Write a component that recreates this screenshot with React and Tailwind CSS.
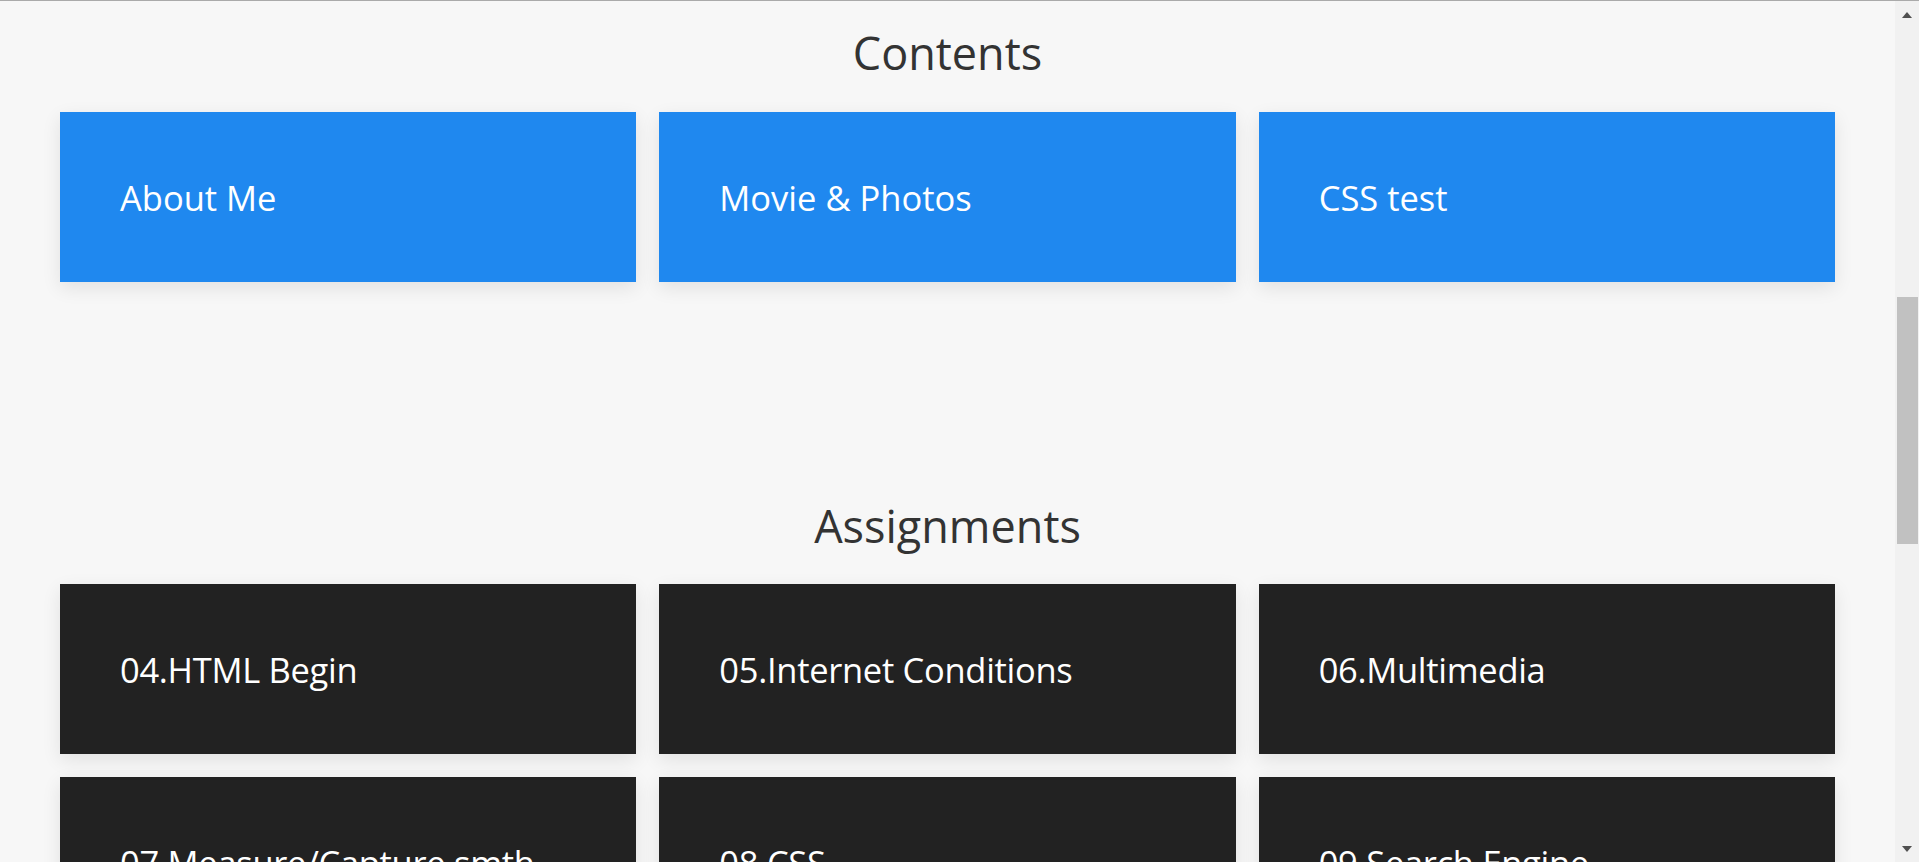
import React from 'react';

const contents = ['About Me', 'Movie & Photos', 'CSS test'];

const assignments = [
  '04.HTML Begin',
  '05.Internet Conditions',
  '06.Multimedia',
  '07.Measure/Capture smth',
  '08.CSS',
  '09.Search Engine',
];

const Card = ({ label, dark }) => (
  <div
    className={`h-[170px] flex items-center pl-[60px] pt-[2px] text-white text-[34.5px] leading-[46px] shadow-[0_6px_18px_rgba(0,0,0,0.09)] ${
      dark ? 'bg-[#222222] tracking-[-0.3px]' : 'bg-[#1f88ef]'
    }`}
  >
    {label}
  </div>
);

const Scrollbar = () => (
  <div className="w-[24px] shrink-0 bg-[#f1f1f1] flex flex-col items-center">
    {/* up arrow */}
    <div className="mt-[11px] w-0 h-0 border-l-[5px] border-r-[5px] border-b-[6px] border-l-transparent border-r-transparent border-b-[#505050]" />
    {/* thumb */}
    <div className="mt-[279px] w-[21px] h-[247px] bg-[#c1c1c1]" />
    <div className="flex-1" />
    {/* down arrow */}
    <div className="mb-[10px] w-0 h-0 border-l-[5px] border-r-[5px] border-t-[6px] border-l-transparent border-r-transparent border-t-[#505050]" />
  </div>
);

const App = () => {
  return (
    <div
      className="h-[862px] overflow-hidden flex flex-col bg-[#f7f7f7] border-t border-[#aaaaaa]"
      style={{ fontFamily: '"Open Sans", "Noto Sans", sans-serif' }}
    >
      <div className="flex flex-1 min-h-0 overflow-hidden">
        <main className="flex-1 overflow-hidden px-[60px]">
          <h2 className="mt-[29px] mb-[37px] text-center text-[45px] leading-[45px] font-normal text-[#333333]">
            Contents
          </h2>
          <div className="grid grid-cols-3 gap-[23px]">
            {contents.map((c) => (
              <Card key={c} label={c} />
            ))}
          </div>

          <h2 className="mt-[221px] mb-[36px] text-center text-[45px] leading-[45px] font-normal text-[#333333]">
            Assignments
          </h2>
          <div className="grid grid-cols-3 gap-[23px]">
            {assignments.map((a) => (
              <Card key={a} label={a} dark />
            ))}
          </div>
        </main>
        <Scrollbar />
      </div>
    </div>
  );
};

export default App;
